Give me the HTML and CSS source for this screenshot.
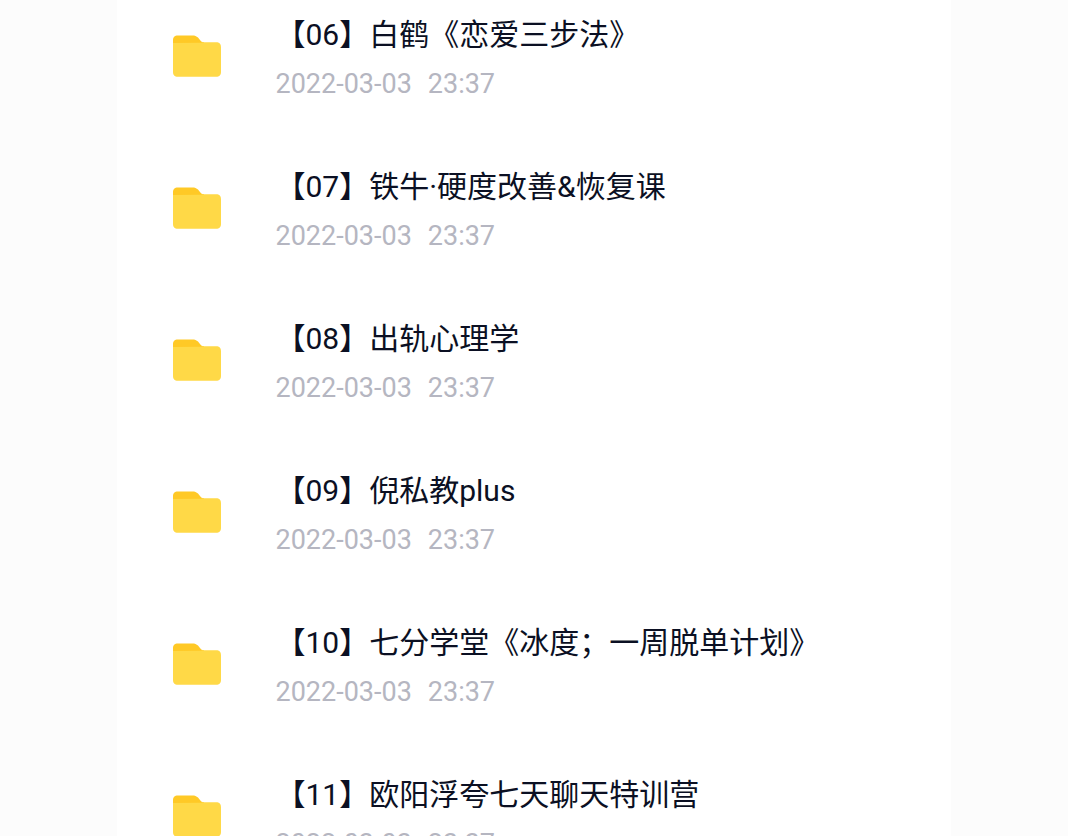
FILE: index.html
```html
<!DOCTYPE html>
<html lang="zh-CN">
<head>
    <meta charset="UTF-8">
    <meta name="viewport" content="width=device-width, initial-scale=1.0">
    <title>文件列表</title>
    <link rel="stylesheet" href="styles.css">
</head>
<body>
    <svg class="sprite" aria-hidden="true">
        <symbol id="folder" viewBox="0 0 48 42">
            <path fill="#ffc926" d="M0 5.500C0 2 1.500.500 5 .500h14.500c2.200 0 4 .6 5.500 2.100l2.200 2.700C28 6.500 29 7.200 31 7.200V12H0z"/>
            <path fill="#ffd947" d="M0 8l27.500-.2c1 0 1.500-.6 3-.6H43c3.500 0 5 1.500 5 5v24.600c0 3.500-1.500 5-5 5H5c-3.500 0-5-1.500-5-5z"/>
        </symbol>
    </svg>
    <main class="panel">
        <ul class="files">
            <li class="file">
                <svg class="icon"><use href="#folder"/></svg>
                <div class="info">
                    <p class="name">【06】白鹤《恋爱三步法》</p>
                    <p class="time"><span>2022-03-03</span><span>23:37</span></p>
                </div>
            </li>
            <li class="file">
                <svg class="icon"><use href="#folder"/></svg>
                <div class="info">
                    <p class="name">【07】铁牛·硬度改善&amp;恢复课</p>
                    <p class="time"><span>2022-03-03</span><span>23:37</span></p>
                </div>
            </li>
            <li class="file">
                <svg class="icon"><use href="#folder"/></svg>
                <div class="info">
                    <p class="name">【08】出轨心理学</p>
                    <p class="time"><span>2022-03-03</span><span>23:37</span></p>
                </div>
            </li>
            <li class="file">
                <svg class="icon"><use href="#folder"/></svg>
                <div class="info">
                    <p class="name">【09】倪私教plus</p>
                    <p class="time"><span>2022-03-03</span><span>23:37</span></p>
                </div>
            </li>
            <li class="file">
                <svg class="icon"><use href="#folder"/></svg>
                <div class="info">
                    <p class="name">【10】七分学堂《冰度；一周脱单计划》</p>
                    <p class="time"><span>2022-03-03</span><span>23:37</span></p>
                </div>
            </li>
            <li class="file">
                <svg class="icon"><use href="#folder"/></svg>
                <div class="info">
                    <p class="name">【11】欧阳浮夸七天聊天特训营</p>
                    <p class="time"><span>2022-03-03</span><span>23:37</span></p>
                </div>
            </li>
        </ul>
    </main>
</body>
</html>
```
FILE: styles.css
```css
body {
    margin: 0;
    background-color: #fcfcfc;
    font-family: Roboto, "Noto Sans CJK SC", sans-serif;
}

.sprite {
    display: none;
}

.panel {
    width: 78%;
    min-height: 100vh;
    margin: 0 auto;
    background-color: #fff;
}

.files {
    list-style: none;
    margin: 0;
    padding: 13px 0 0;
    display: grid;
    gap: 66px;
}

.file {
    display: flex;
    align-items: center;
    gap: 54px;
    padding: 0 56px;
}

.icon {
    width: 48px;
    height: 42px;
    flex: none;
}

.info {
    display: grid;
    gap: 12px;
}

.name,
.time {
    margin: 0;
    white-space: nowrap;
}

.name {
    font-size: 30px;
    line-height: 44px;
    color: #0b1023;
}

.time {
    display: flex;
    gap: 16px;
    font-size: 27px;
    line-height: 30px;
    color: #b5b6c1;
}
```
